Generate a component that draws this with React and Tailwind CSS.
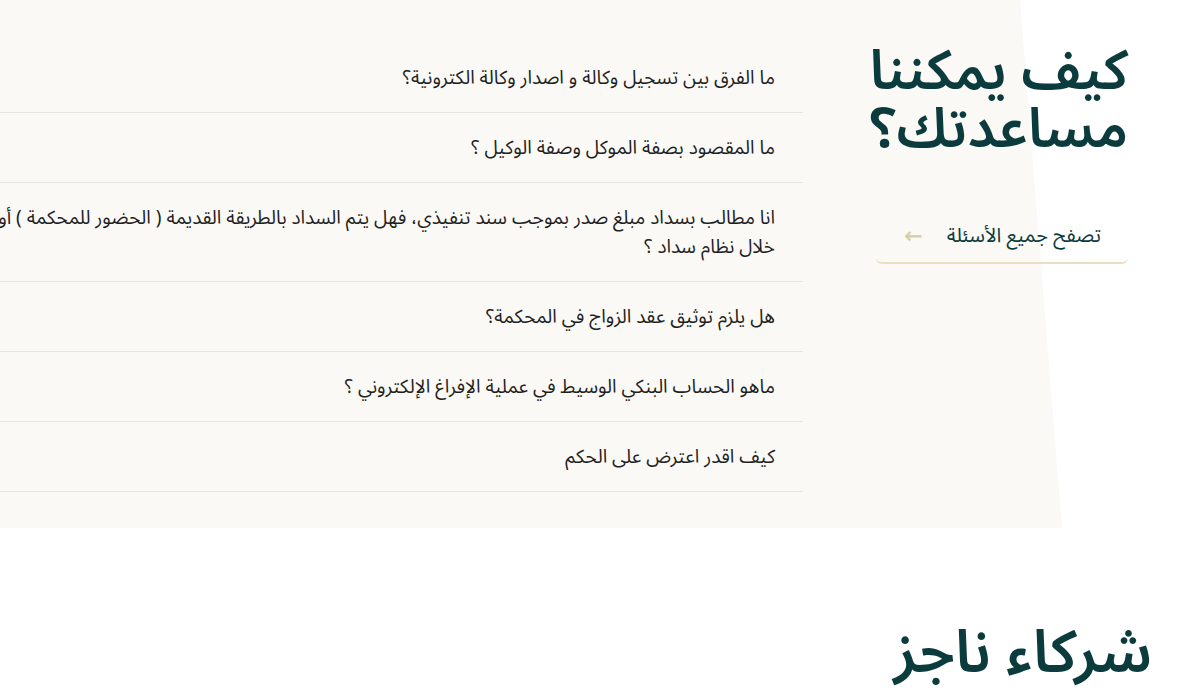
import React from 'react'

const questions = [
    'ما الفرق بين تسجيل وكالة و اصدار وكالة الكترونية؟',
    'ما المقصود بصفة الموكل وصفة الوكيل ؟',
    null,
    'هل يلزم توثيق عقد الزواج في المحكمة؟',
    'ماهو الحساب البنكي الوسيط في عملية الإفراغ الإلكتروني ؟',
    'كيف اقدر اعترض على الحكم',
];

const FaqItem = ({ children, first }) => (
    <div className={`pt-[21px] pb-[19px] pr-[28px] text-[19px] leading-[29px] text-[#1f1f1f] ${first ? '' : 'border-t border-[#e7e5e0]'}`}>
        {children}
    </div>
);

const HelpSection = () => {
    return (
        <section className="relative h-[528px] overflow-hidden">
            {/* beige background with slanted edge */}
            <div className="absolute inset-0 bg-[#faf9f5] [clip-path:polygon(0_0,1020px_0,1062px_100%,0_100%)]"></div>

            <div className="relative flex flex-row pt-[43px]">
                <div className="w-[252px] mr-[72px] shrink-0">
                    <h2 className="whitespace-nowrap text-[55px] leading-[58px] font-semibold text-[#0c3b3d]">
                        كيف يمكننا
                        <br />
                        مساعدتك؟
                    </h2>
                    <button className="mt-[51px] w-full h-[54px] flex items-center gap-[24px] pr-[27px] rounded-md border-b-2 border-[#eadfc4] text-[20px] text-[#0c3b3d]">
                        <span>تصفح جميع الأسئلة</span>
                        <span className="text-[#d7d1a9] text-[22px] font-bold">←</span>
                    </button>
                </div>

                <div className="w-[860px] shrink-0 mr-[73px]">
                    {questions.map((q, i) => (
                        <FaqItem key={i} first={i === 0}>
                            {q ?? (
                                <>
                                    <span className="whitespace-nowrap">انا مطالب بسداد مبلغ صدر بموجب سند تنفيذي، فهل يتم السداد بالطريقة القديمة ( الحضور للمحكمة ) أو من</span>
                                    <br />
                                    خلال نظام سداد ؟
                                </>
                            )}
                        </FaqItem>
                    ))}
                    <div className="border-t border-[#e7e5e0]"></div>
                </div>
            </div>
        </section>
    );
};

export default function App() {
    return (
        <div dir="rtl" className="w-[1200px] h-[700px] overflow-hidden bg-white font-['Noto_Sans_Arabic','DejaVu_Sans',sans-serif]">
            <HelpSection />
            <section className="pt-[94px] pr-[48px]">
                <h2 className="text-[59px] leading-[64px] font-semibold text-[#0c3b3d]">شركاء ناجز</h2>
            </section>
        </div>
    );
}
